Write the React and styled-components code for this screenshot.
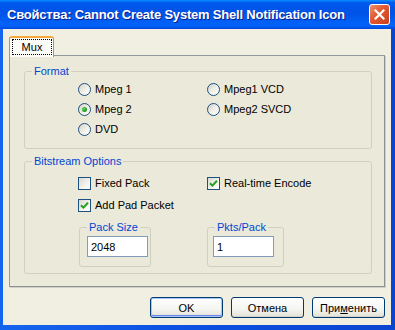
import styled, { createGlobalStyle } from 'styled-components';

const GlobalStyle = createGlobalStyle`
  html, body {
    margin: 0;
    padding: 0;
    background: #ffffff;
  }
  body {
    font-family: "Liberation Sans", Arial, sans-serif;
    font-size: 11px;
    color: #000000;
  }
`;

const Window = styled.div`
  width: 395px;
  height: 330px;
  display: flex;
  flex-direction: column;
  background: linear-gradient(to right, #1665ee 0%, #0b4fe0 50%, #0a45d0 100%);
  box-sizing: border-box;
`;

const TitleBar = styled.div`
  height: 29px;
  flex: none;
  display: flex;
  align-items: center;
  justify-content: space-between;
  padding: 0 5px 0 7px;
  background: linear-gradient(
    to bottom,
    #0a8cff 0%,
    #0058ee 10%,
    #0053e6 45%,
    #0161f8 80%,
    #0161f8 90%,
    #0047d8 100%
  );
`;

const Title = styled.span`
  color: #ffffff;
  font-family: "Liberation Sans", Arial, sans-serif;
  font-weight: bold;
  font-size: 13px;
  letter-spacing: -0.2px;
  text-shadow: 1px 1px 0 #0a1e8c;
  white-space: nowrap;
`;

const CloseButton = styled.button`
  width: 21px;
  height: 21px;
  padding: 0;
  border: 1px solid #ffffff;
  border-radius: 3px;
  background: linear-gradient(135deg, #f0926c 0%, #e45b33 40%, #c8401a 100%);
  display: flex;
  align-items: center;
  justify-content: center;
`;

const Frame = styled.div`
  flex: 1;
  display: flex;
  flex-direction: column;
  margin: 0 4px 5px 3px;
  padding: 7px 6px 7px 6px;
  background: #f0efe1;
  box-sizing: border-box;
`;

const TabStrip = styled.div`
  display: flex;
  height: 20px;
  flex: none;
  position: relative;
  z-index: 1;
  margin-bottom: -1px;
`;

const Tab = styled.div`
  width: 45px;
  height: 21px;
  box-sizing: border-box;
  border: 1px solid #919b9c;
  border-top: 2px solid #f5a93c;
  border-bottom: none;
  border-radius: 3px 3px 0 0;
  background: #fcfcf8;
  padding: 1px 1px 1px 2px;
`;

const TabLabel = styled.div`
  height: 16px;
  border: 1px dotted #000000;
  box-sizing: border-box;
  display: flex;
  align-items: center;
  justify-content: center;
  line-height: 13px;
`;

const Panel = styled.div`
  flex: 1;
  border: 1px solid #919b9c;
  border-right-color: #8a9293;
  border-bottom-color: #8a9293;
  box-shadow: 1px 1px 0 #d0cfc2;
  background: #ebe9d9;
  padding: 9px 12px 0 14px;
  display: flex;
  flex-direction: column;
  gap: 6px;
`;

const Group = styled.fieldset`
  margin: 0;
  padding: 0;
  min-width: 0;
  border: 1px solid #d0d0bf;
  border-radius: 3px;
`;

const Legend = styled.legend`
  margin-left: 7px;
  padding: 0 2px;
  color: #0046d5;
  font-size: 11px;
  line-height: 13px;
`;

const Grid = styled.div`
  display: grid;
  grid-template-columns: 129px 1fr;
  grid-auto-rows: ${({ $row }) => $row}px;
  padding: ${({ $pad }) => $pad};
`;

const Option = styled.label`
  display: flex;
  align-items: center;
  gap: 4px;
  white-space: nowrap;
`;

const RadioCircle = styled.span`
  width: 13px;
  height: 13px;
  flex: none;
  box-sizing: border-box;
  border: 1px solid #1c5180;
  border-radius: 50%;
  background: linear-gradient(135deg, #d4d3ca 0%, #f2f1ea 55%, #ffffff 100%);
  display: flex;
  align-items: center;
  justify-content: center;
`;

const RadioDot = styled.span`
  width: 5px;
  height: 5px;
  border-radius: 50%;
  background: radial-gradient(circle at 35% 35%, #5fd35f 0%, #21a121 60%, #1a7a1a 100%);
`;

const CheckBox = styled.span`
  width: 13px;
  height: 13px;
  flex: none;
  box-sizing: border-box;
  border: 1px solid #1c5180;
  background: linear-gradient(135deg, #d8d7cf 0%, #f4f3ee 60%, #ffffff 100%);
  display: flex;
  align-items: center;
  justify-content: center;
`;

const SmallGroup = styled.fieldset`
  margin: 0;
  padding: 2px 0 9px 0;
  min-width: 0;
  width: ${({ $w }) => $w}px;
  box-sizing: border-box;
  border: 1px solid #d0d0bf;
  border-radius: 3px;
`;

const FieldRow = styled.div`
  display: grid;
  grid-template-columns: 128px 1fr;
  padding: 5px 0 6px 54px;
`;

const TextInput = styled.input`
  width: 61px;
  height: 21px;
  margin-left: ${({ $indent }) => $indent}px;
  box-sizing: border-box;
  border: 1px solid #7f9db9;
  background: #ffffff;
  padding: 0 3px;
  font-family: "Liberation Sans", Arial, sans-serif;
  font-size: 11px;
  color: #000000;
  outline: none;
`;

const ButtonRow = styled.div`
  display: flex;
  justify-content: flex-end;
  gap: 8px;
  margin-top: 10px;
`;

const Button = styled.button`
  width: 73px;
  height: 21px;
  box-sizing: border-box;
  border: 1px solid #003c74;
  border-radius: 3px;
  background: linear-gradient(to bottom, #ffffff 0%, #f4f4f0 60%, #e3e1d6 100%);
  font-family: "Liberation Sans", Arial, sans-serif;
  font-size: 11px;
  color: #000000;
  padding: 0;
  box-shadow: ${({ $default }) =>
    $default ? 'inset 0 0 0 1px #a9c6f5, inset 0 -1px 0 1px #6982ee' : 'inset 0 -1px 0 #d6d0c5'};
`;

const Radio = ({ label, checked }) => (
  <Option>
    <RadioCircle>{checked && <RadioDot />}</RadioCircle>
    {label}
  </Option>
);

const Check = ({ label, checked }) => (
  <Option>
    <CheckBox>
      {checked && (
        <svg width="9" height="9" viewBox="0 0 9 9">
          <path d="M1 4.2 L3.4 6.6 L8 1.8" fill="none" stroke="#21a121" strokeWidth="2" />
        </svg>
      )}
    </CheckBox>
    {label}
  </Option>
);

export default function App() {
  return (
    <>
      <GlobalStyle />
      <Window>
        <TitleBar>
          <Title>Свойства: Cannot Create System Shell Notification Icon</Title>
          <CloseButton>
            <svg width="11" height="11" viewBox="0 0 11 11">
              <path d="M1.5 1.5 L9.5 9.5 M9.5 1.5 L1.5 9.5" stroke="#ffffff" strokeWidth="2.2" strokeLinecap="square" />
            </svg>
          </CloseButton>
        </TitleBar>
        <Frame>
          <TabStrip>
            <Tab>
              <TabLabel>Mux</TabLabel>
            </Tab>
          </TabStrip>
          <Panel>
            <Group>
              <Legend>Format</Legend>
              <Grid $row={20} $pad="1px 0 9px 53px">
                <Radio label="Mpeg 1" />
                <Radio label="Mpeg1 VCD" />
                <Radio label="Mpeg 2" checked />
                <Radio label="Mpeg2 SVCD" />
                <Radio label="DVD" />
              </Grid>
            </Group>
            <Group>
              <Legend>Bitstream Options</Legend>
              <Grid $row={22} $pad="4px 0 0 53px">
                <Check label="Fixed Pack" />
                <Check label="Real-time Encode" checked />
                <Check label="Add Pad Packet" checked />
              </Grid>
              <FieldRow>
                <SmallGroup $w={72}>
                  <Legend>Pack Size</Legend>
                  <TextInput $indent={7} defaultValue="2048" />
                </SmallGroup>
                <SmallGroup $w={77}>
                  <Legend>Pkts/Pack</Legend>
                  <TextInput $indent={5} defaultValue="1" />
                </SmallGroup>
              </FieldRow>
            </Group>
          </Panel>
          <ButtonRow>
            <Button $default>OK</Button>
            <Button>Отмена</Button>
            <Button>
              При<u>м</u>енить
            </Button>
          </ButtonRow>
        </Frame>
      </Window>
    </>
  );
}
